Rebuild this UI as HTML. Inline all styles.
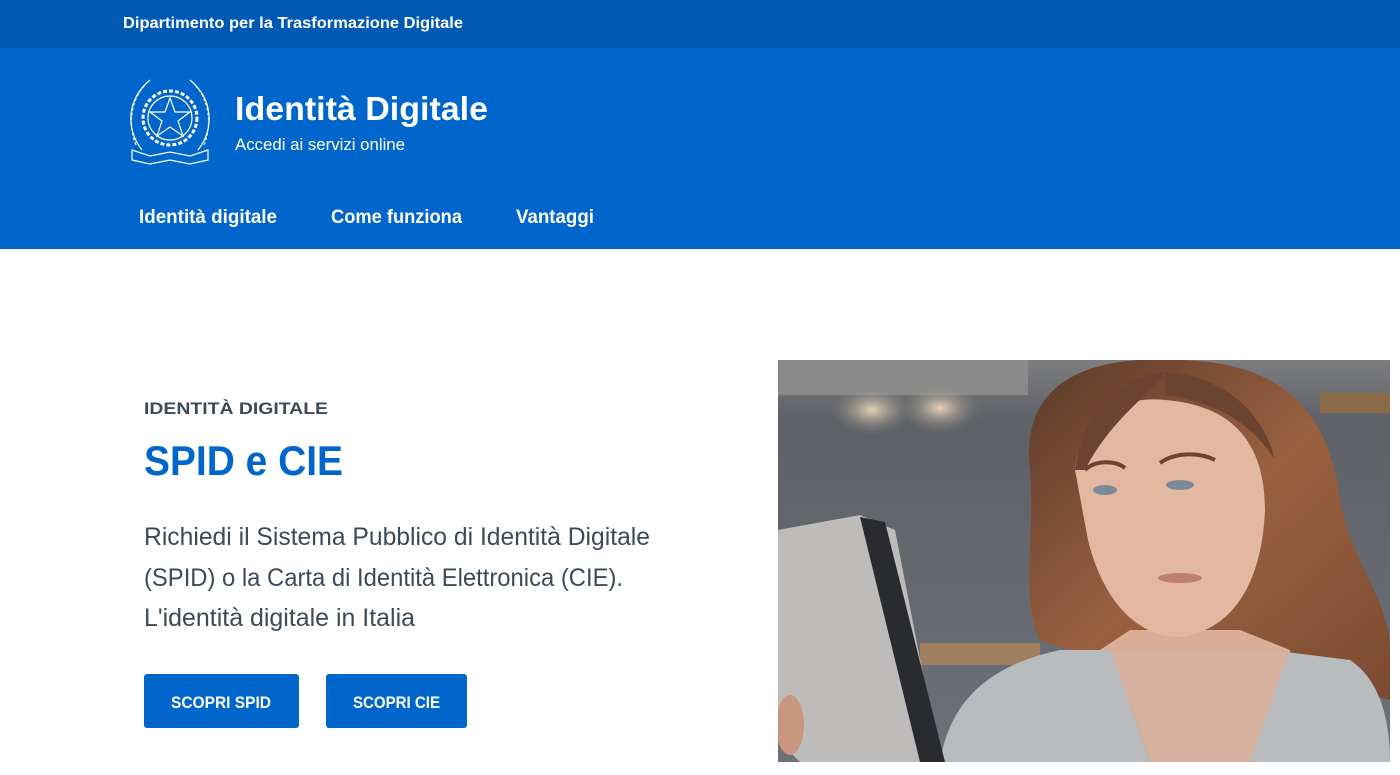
<!DOCTYPE html>
<html><head><meta charset="utf-8"><style>
html,body{margin:0;padding:0;width:1400px;height:775px;overflow:hidden;background:#fff;font-family:"Liberation Sans",sans-serif}
</style></head><body>
<svg width="1400" height="775" viewBox="0 0 1400 775" xmlns="http://www.w3.org/2000/svg" font-family="Liberation Sans, sans-serif">
<defs>
<linearGradient id="bg" x1="0" y1="0" x2="0" y2="1"><stop offset="0" stop-color="#7d7e80"/><stop offset="0.15" stop-color="#5e6166"/><stop offset="1" stop-color="#6d7178"/></linearGradient>
<radialGradient id="lamp" cx="0.5" cy="0.5" r="0.5"><stop offset="0" stop-color="#e8d2b8"/><stop offset="1" stop-color="#8a8580" stop-opacity="0"/></radialGradient>
<linearGradient id="hair" x1="0" y1="0" x2="1" y2="1"><stop offset="0" stop-color="#5a3a28"/><stop offset="0.5" stop-color="#9a6040"/><stop offset="1" stop-color="#7a4a30"/></linearGradient>
<clipPath id="ph"><rect x="778" y="360" width="612" height="402"/></clipPath>
</defs>
<rect x="0" y="0" width="1400" height="48" fill="#0059b3"/>
<rect x="0" y="48" width="1400" height="201" fill="#0066cc"/>
<text x="123" y="28" fill="#fff" font-size="16" font-weight="bold" textLength="340" lengthAdjust="spacingAndGlyphs">Dipartimento per la Trasformazione Digitale</text>
<g fill="none" stroke="#fff" stroke-width="1.2">
<circle cx="170" cy="118" r="27" stroke-dasharray="4 2" stroke-width="3"/>
<circle cx="170" cy="118" r="22"/>
<polygon points="170,98 175,112 190,112 178,121 183,136 170,127 157,136 162,121 150,112 165,112"/>
<path d="M142 150 C126 130 126 100 150 80 M198 150 C214 130 214 100 190 80"/>
<path d="M136 145 C128 125 130 100 146 84 M204 145 C212 125 210 100 194 84" stroke-dasharray="3 2"/>
<path d="M132 150 L150 156 L170 152 L190 156 L208 150 L208 160 L190 164 L170 160 L150 164 L132 160 Z"/>
</g>
<text x="235" y="120" fill="#fff" font-size="33" font-weight="bold" textLength="253" lengthAdjust="spacingAndGlyphs">Identità Digitale</text>
<text x="235" y="150" fill="#fff" font-size="17" textLength="170" lengthAdjust="spacingAndGlyphs">Accedi ai servizi online</text>
<text x="139" y="223" fill="#fff" font-size="19" font-weight="bold" textLength="138" lengthAdjust="spacingAndGlyphs">Identità digitale</text>
<text x="331" y="223" fill="#fff" font-size="19" font-weight="bold" textLength="131" lengthAdjust="spacingAndGlyphs">Come funziona</text>
<text x="516" y="223" fill="#fff" font-size="19" font-weight="bold" textLength="78" lengthAdjust="spacingAndGlyphs">Vantaggi</text>

<text x="144" y="414" fill="#3d4a57" font-size="17" font-weight="bold" textLength="184" lengthAdjust="spacingAndGlyphs">IDENTITÀ DIGITALE</text>
<text x="144" y="475" fill="#0066cc" font-size="42" font-weight="bold" textLength="199" lengthAdjust="spacingAndGlyphs">SPID e CIE</text>
<g fill="#3d4a57" font-size="25">
<text x="144" y="545" textLength="506" lengthAdjust="spacingAndGlyphs">Richiedi il Sistema Pubblico di Identità Digitale</text>
<text x="144" y="586" textLength="479" lengthAdjust="spacingAndGlyphs">(SPID) o la Carta di Identità Elettronica (CIE).</text>
<text x="144" y="626" textLength="271" lengthAdjust="spacingAndGlyphs">L'identità digitale in Italia</text>
</g>
<rect x="144" y="674" width="155" height="54" rx="3" fill="#0066cc"/>
<rect x="326" y="674" width="141" height="54" rx="3" fill="#0066cc"/>
<text x="171" y="708" fill="#fff" font-size="17" font-weight="bold" textLength="100" lengthAdjust="spacingAndGlyphs">SCOPRI SPID</text>
<text x="353" y="708" fill="#fff" font-size="17" font-weight="bold" textLength="87" lengthAdjust="spacingAndGlyphs">SCOPRI CIE</text>

<g clip-path="url(#ph)">
<rect x="778" y="360" width="612" height="402" fill="url(#bg)"/>
<rect x="778" y="360" width="250" height="35" fill="#8a8a8a"/>
<ellipse cx="872" cy="410" rx="40" ry="25" fill="url(#lamp)"/>
<ellipse cx="940" cy="408" rx="40" ry="25" fill="url(#lamp)"/>
<rect x="920" y="643" width="120" height="22" fill="#a08060"/>
<rect x="1320" y="393" width="70" height="20" fill="#8a6a48"/>
<path d="M1030 470 C1020 380 1090 355 1180 360 C1290 362 1330 420 1340 500 C1350 560 1390 600 1390 650 L1390 700 L1310 680 L1100 660 L1040 640 C1020 600 1035 540 1030 470 Z" fill="url(#hair)"/>
<path d="M1100 650 L1130 630 L1240 630 L1290 650 L1290 700 L1110 700 Z" fill="#d9ad96"/>
<path d="M1075 470 C1080 420 1120 395 1165 400 C1230 405 1265 440 1265 510 C1262 580 1235 630 1180 637 C1130 637 1100 590 1088 540 Z" fill="#e2b9a0"/>
<path d="M1075 470 C1085 400 1130 375 1165 372 C1150 395 1110 420 1085 470 Z" fill="#6a4430"/>
<path d="M1165 372 C1210 375 1260 400 1275 460 C1250 420 1210 400 1165 395 Z" fill="#6a4430"/>
<ellipse cx="1105" cy="490" rx="12" ry="5" fill="#7c8a98"/>
<ellipse cx="1180" cy="485" rx="14" ry="5" fill="#7c8a98"/>
<path d="M1085 470 C1095 460 1115 460 1125 468 M1160 463 C1175 452 1200 452 1215 460" stroke="#6a4430" stroke-width="4" fill="none"/>
<ellipse cx="1180" cy="578" rx="22" ry="5" fill="#c08070"/>
<path d="M940 762 C950 700 990 665 1060 650 L1110 650 L1150 762 Z" fill="#b9bcbf"/>
<path d="M1270 650 L1350 660 C1380 680 1390 720 1390 762 L1250 762 Z" fill="#b9bcbf"/>
<path d="M1110 650 L1150 762 L1250 762 L1290 650 Z" fill="#d7b1a0"/>
<path d="M778 530 L860 515 L895 530 L940 762 L800 762 L778 740 Z" fill="#bdbcba"/>
<path d="M860 517 L885 522 L945 762 L920 762 Z" fill="#2a2b2e"/>
<ellipse cx="790" cy="725" rx="14" ry="30" fill="#c9977f"/>
</g>
</svg>
</body></html>
